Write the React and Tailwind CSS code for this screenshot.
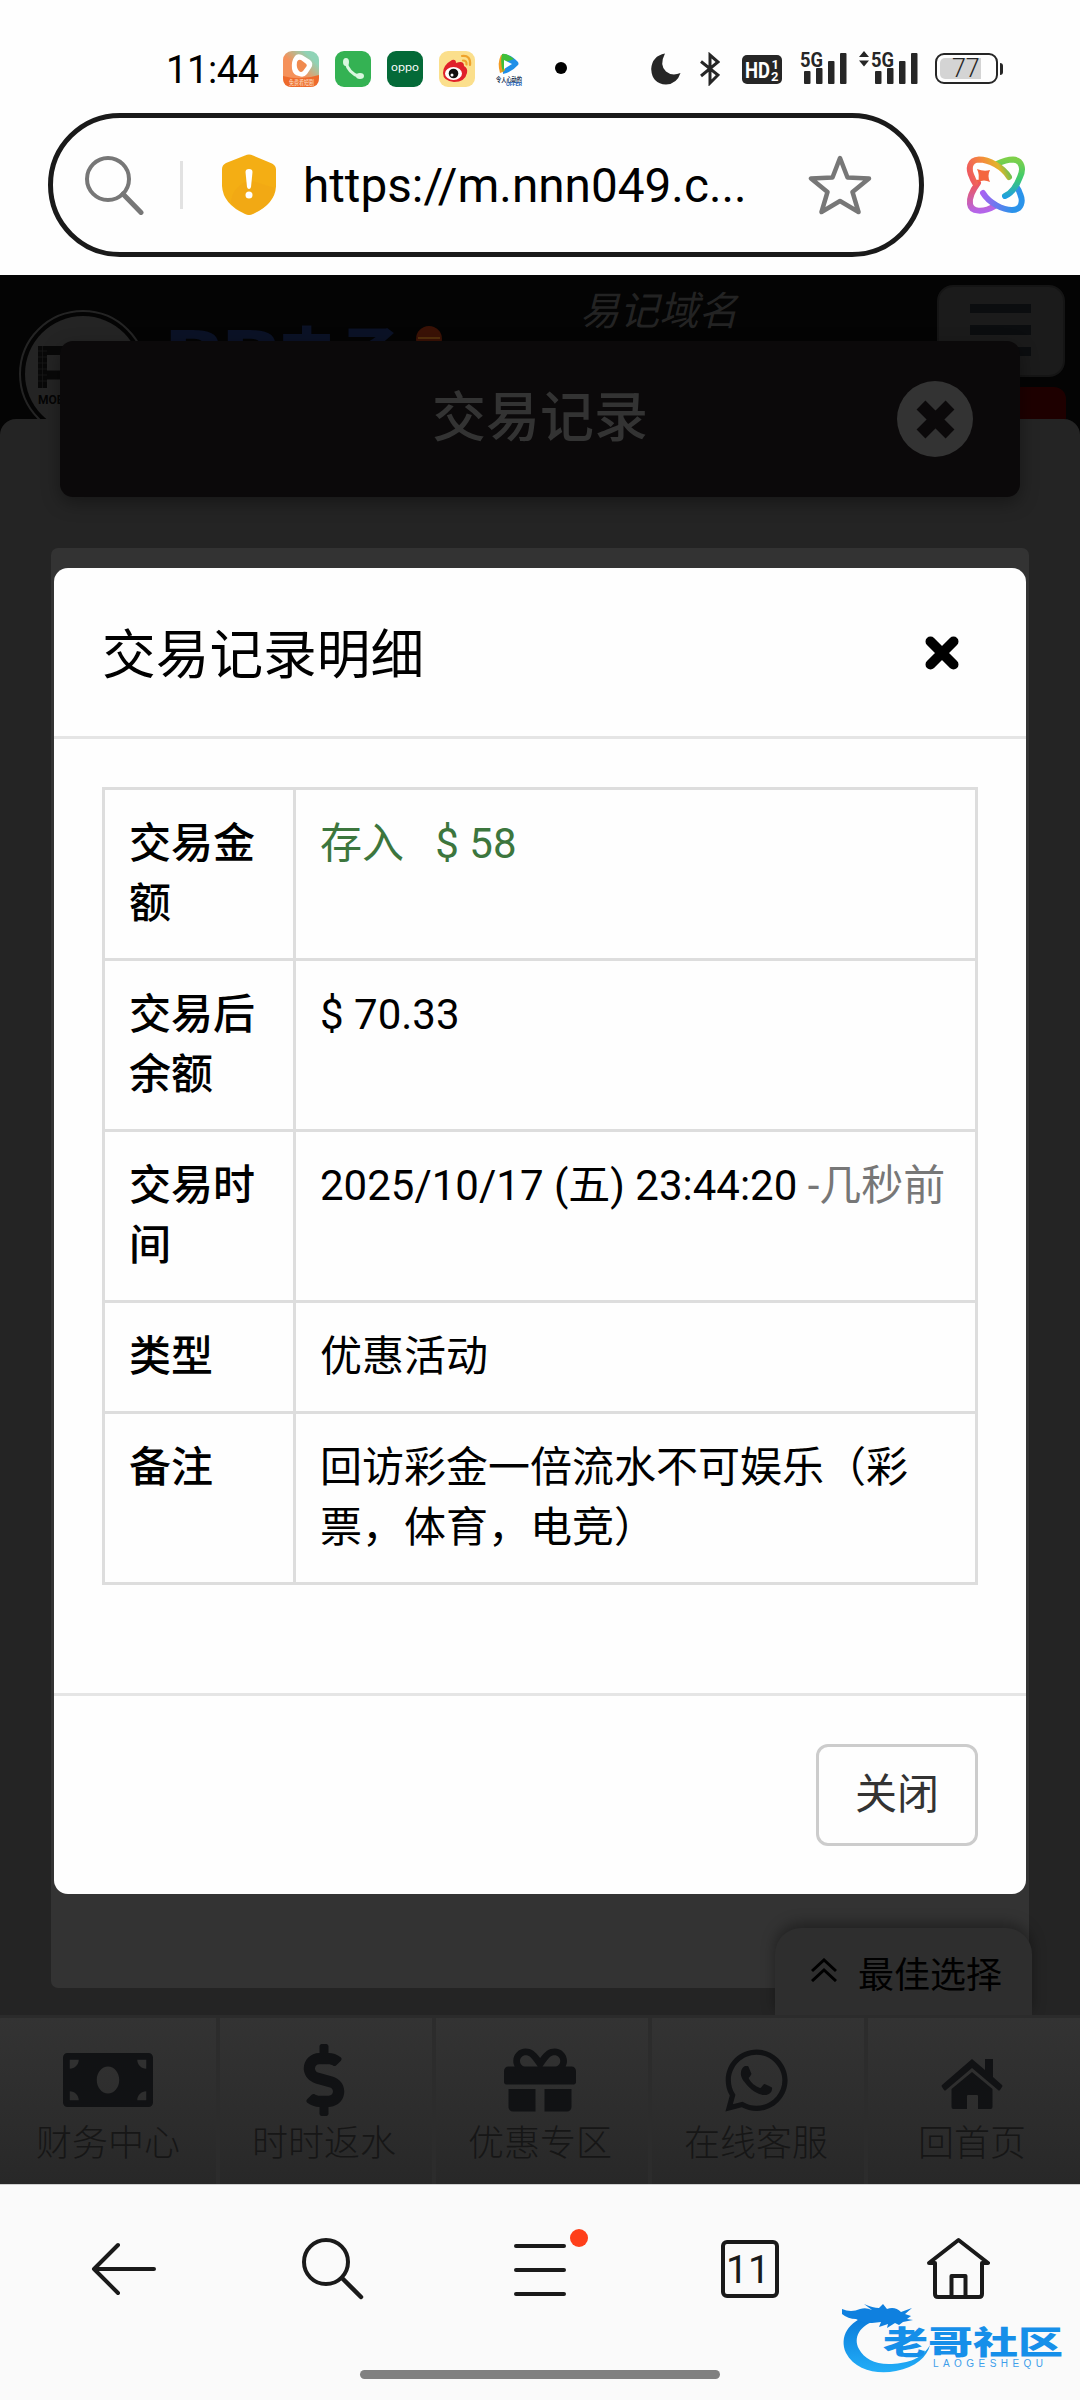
import { FaDollarSign, FaGift, FaMoneyBill, FaWhatsapp } from 'react-icons/fa';

const rows = [
  { label: '交易金额', value: <span className="text-[#3c763d]">存入{'\u00a0\u00a0\u00a0'}$ 58</span> },
  { label: '交易后余额', value: '$ 70.33' },
  {
    label: '交易时间',
    value: <>2025/10/17 (五) 23:44:20 <span className="text-[#777]">-几秒前</span></>
  },
  { label: '类型', value: '优惠活动' },
  { label: '备注', value: '回访彩金一倍流水不可娱乐（彩票，体育，电竞）' }
];

const HomeGlyph = () => (
  <svg className="w-[62px] h-[50px]" viewBox="0 0 62 50" fill="currentColor">
    <path d="M31 0L44 11V0h8v18l9 8q1 1 0 2l-2 3q-1 1-2 0L31 9 5 31q-1 1-2 0l-2-3q-1-1 0-2z" />
    <path d="M31 13L51.500 30v18q0 2-2 2H37V37q0-1-1-1H27q-1 0-1 1v13H12.500q-2 0-2-2V30z" />
  </svg>
);

const navItems = [
  { text: '财务中心', icon: <FaMoneyBill className="w-[90px] h-[72px]" /> },
  { text: '时时返水', icon: <FaDollarSign className="w-[42px] h-[72px]" /> },
  { text: '优惠专区', icon: <FaGift className="w-[72px] h-[72px]" /> },
  { text: '在线客服', icon: <FaWhatsapp className="w-[71px] h-[71px]" /> },
  { text: '回首页', icon: <div className="pt-2"><HomeGlyph /></div> }
];

function Signal({ arrows }) {
  return (
    <svg className={arrows ? 'w-[60px] h-[34px] ml-[11px] overflow-visible' : 'w-[48px] h-[34px] ml-[18px] overflow-visible'} viewBox={arrows ? '-12 0 60 34' : '0 0 48 34'} fill="#262626">
      <text x="0" y="15.500" fontSize="21" fontWeight="700" fontFamily="Roboto" textLength="23" lengthAdjust="spacingAndGlyphs">5G</text>
      <rect x="4" y="20" width="6.500" height="13" rx="1" />
      <rect x="16" y="17" width="6.500" height="16" rx="1" />
      <rect x="28" y="10" width="6.500" height="23" rx="1" />
      <rect x="40" y="2" width="6.500" height="31" rx="1" />
      {arrows && <path d="M-12 6l5-6 5 6zM-12 9.500l5 6 5-6z" />}
    </svg>
  );
}

function StatusBar() {
  return (
    <div className="h-[113px] pt-[51px] pl-[166px] flex items-start">
      <div className="w-[117px] h-9 leading-9 text-[38px] text-black tracking-[-0.4px] pt-px">11:44</div>
      <div className="flex gap-4">
        {/* video app */}
        <svg className="w-9 h-9 overflow-visible" viewBox="0 0 36 36">
          <defs>
            <linearGradient id="vid" x1="0" y1="1" x2="1" y2="0">
              <stop offset="0.450" stopColor="#f5915a" />
              <stop offset="0.800" stopColor="#8fd3b6" />
            </linearGradient>
          </defs>
          <rect width="36" height="36" rx="9" fill="url(#vid)" />
          <path d="M0 25q18 5 36-1v3q0 9-9 9H9q-9 0-9-9z" fill="#ee6a2c" />
          <path d="M12 5q2-3 7-1l8 5q4 3 1 8l-4 6q-3 4-8 2-6-1-7-7-1-8 3-13z" fill="#fff" />
          <path d="M14 11q1-3 4-2l4 3q3 2 1 4l-3 4q-2 2-4 0-3-3-2-9z" fill="#f08a4f" />
          <text x="6" y="34" fontSize="6.500" fill="#fde0c8" fontFamily="Noto Sans CJK SC" textLength="25" lengthAdjust="spacingAndGlyphs">免费看短剧</text>
        </svg>
        {/* phone */}
        <svg className="w-9 h-9" viewBox="0 0 36 36">
          <rect width="36" height="36" rx="9" fill="#34b253" />
          <path d="M11 11q2 11 14 15" fill="none" stroke="#d9f7df" strokeWidth="3" />
          <ellipse cx="11" cy="11" rx="3" ry="4" fill="#d9f7df" />
          <ellipse cx="25" cy="25" rx="4" ry="3" fill="#d9f7df" />
        </svg>
        {/* oppo */}
        <svg className="w-9 h-9" viewBox="0 0 36 36">
          <rect width="36" height="36" rx="9" fill="#046a38" />
          <text x="4" y="20" fontSize="9.500" fill="#fff" fontFamily="Inter" textLength="28" lengthAdjust="spacingAndGlyphs">oppo</text>
        </svg>
        {/* weibo */}
        <svg className="w-9 h-9" viewBox="0 0 36 36">
          <rect width="36" height="36" rx="9" fill="#fbdf8c" />
          <path d="M4 22Q4 14 13 9q4-1 4 3 8-3 8 3 4 2 3 7-2 9-13 9Q4 30 4 22z" fill="#e0202a" />
          <ellipse cx="14.500" cy="22.500" rx="8.500" ry="6.500" fill="#fff" />
          <circle cx="14.500" cy="22.500" r="4.800" fill="#111" />
          <circle cx="13" cy="24" r="1.500" fill="#fff" />
          <path d="M23 5q9-1 8 9M24 9.500q4 0 3.500 4" fill="none" stroke="#efa32c" strokeWidth="2.200" strokeLinecap="round" />
        </svg>
        {/* tencent video */}
        <svg className="w-9 h-9 overflow-visible" viewBox="0 0 36 36">
          <path d="M11 3q9 0 16 8 1 2 0 3-6 7-15 9z" fill="#1f8fe8" />
          <path d="M10 4q-4 8-1 18 4-1 5-3V5z" fill="#f39a21" />
          <path d="M11 3q5-1 12 5l-8 3-3 10q-3-9-1-18z" fill="#3fbf3a" />
          <path d="M13 9l8 4-8 5z" fill="#fff" />
          <text x="5" y="30.500" fontSize="6.500" fontWeight="700" fill="#1c3554" fontFamily="Noto Sans CJK SC" textLength="26" lengthAdjust="spacingAndGlyphs">令人心动的</text>
          <text x="15" y="35" fontSize="5.500" fontWeight="700" fill="#2a67b8" fontFamily="Roboto" textLength="16">OFFER</text>
        </svg>
      </div>
      <div className="w-3 h-3 ml-7 mt-[11px] rounded-full bg-black" />
      <svg className="w-[30px] h-8 ml-[84px] mt-0.5" viewBox="0 0 30 32" fill="#262626">
        <path d="M14 .500Q8 12 15 18.500q6 5 14.500 1.500Q26 31 15 31.500 1 31 .200 16 1 3 14 .500z" />
      </svg>
      <svg className="w-5 h-[34px] ml-[19px] mt-px" viewBox="0 0 20 34" fill="none" stroke="#262626" strokeWidth="3">
        <path d="M1 9.500L18 23 10 31V3l8 7L1 24" />
      </svg>
      <svg className="w-10 h-[29px] ml-[22px] mt-1 overflow-visible" viewBox="0 0 40 29">
        <rect width="40" height="29" rx="5" fill="#262626" />
        <text x="3" y="22.500" fontSize="22" fontWeight="700" fill="#fff" fontFamily="Roboto" textLength="25" lengthAdjust="spacingAndGlyphs">HD</text>
        <text x="29.500" y="14" fontSize="13" fontWeight="700" fill="#fff" fontFamily="Roboto">1</text>
        <text x="29" y="26" fontSize="13" fontWeight="700" fill="#fff" fontFamily="Roboto">2</text>
      </svg>
      <Signal />
      <Signal arrows />
      <div className="ml-4 mt-0.5 w-[63px] h-[31px] rounded-[9px] border-2 border-[#262626] p-[3px]">
        <div className="w-[41px] h-[21px] rounded-l-[5px] bg-[#d4d4d4] pl-3 text-[25px] leading-[22px] font-light text-[#262626]">77</div>
      </div>
      <div className="ml-0.5 mt-3 w-[3px] h-3 rounded-r bg-[#262626]" />
    </div>
  );
}

function AddressBar() {
  return (
    <div className="h-[162px] pl-12 flex items-start">
      <div className="w-[876px] h-36 rounded-full border-[5px] border-[#1a1a1a] flex items-center">
        <svg className="w-[60px] h-[60px] ml-[31px]" viewBox="0 0 60 60" fill="none" stroke="#777" strokeWidth="4">
          <circle cx="24" cy="24" r="21" />
          <path d="M39 39L57 57.500" strokeWidth="5" strokeLinecap="round" />
        </svg>
        <div className="w-[3px] h-12 ml-9 bg-[#e2e2e2]" />
        <svg className="w-[54px] h-[62px] ml-[39px]" viewBox="0 0 54 62">
          <path d="M23 1.500q4-2 8 0l19 8q4 2 4 6v17Q53 50 31 60q-4 2-8 0Q1 50 0 32V15q0-4 4-6z" fill="#f4ae14" />
          <path d="M27 26Q9 34 9 49q8 8 18 12 24-8 26-27l-26-8z" fill="#f0a215" opacity="0.400" />
          <path d="M23.500 18q0-3 3.500-3t3.500 3l-1.500 15q-.5 2-2 2t-2-2z" fill="#fff" />
          <circle cx="27" cy="41" r="3.500" fill="#fff" />
        </svg>
        <div className="ml-[27px] w-[444px] text-[47.700px] leading-none text-black whitespace-nowrap pt-1">https://m.nnn049.c...</div>
        <svg className="w-[64px] h-[60px] ml-[61px]" viewBox="0 0 64 60" fill="none" stroke="#777" strokeWidth="4.500" strokeLinejoin="round">
          <path d="M32 3l7.500 19.500L61 23.500 44.500 37 50.500 57 32 46 13.500 57l6-20L3 23.500l21.500-1z" />
        </svg>
      </div>
      <svg className="w-20 h-20 ml-[31px] mt-8" viewBox="0 0 80 80" fill="none" strokeWidth="6" strokeLinecap="round">
        <defs>
          <linearGradient id="o1" gradientUnits="userSpaceOnUse" x1="16" y1="40" x2="56" y2="24">
            <stop offset="0" stopColor="#ee5562" />
            <stop offset="0.450" stopColor="#f58a3c" />
            <stop offset="0.750" stopColor="#e2b52a" />
            <stop offset="1" stopColor="#4cc458" />
          </linearGradient>
          <linearGradient id="o2" gradientUnits="userSpaceOnUse" x1="56" y1="14" x2="56" y2="52">
            <stop offset="0" stopColor="#7ed04a" />
            <stop offset="0.500" stopColor="#3ecb6d" />
            <stop offset="1" stopColor="#1f9fe0" />
          </linearGradient>
          <linearGradient id="o3" gradientUnits="userSpaceOnUse" x1="28" y1="48" x2="60" y2="60">
            <stop offset="0" stopColor="#a763f2" />
            <stop offset="1" stopColor="#2a93ea" />
          </linearGradient>
          <linearGradient id="o4" gradientUnits="userSpaceOnUse" x1="24" y1="36" x2="28" y2="66">
            <stop offset="0" stopColor="#f2564f" />
            <stop offset="1" stopColor="#b465ea" />
          </linearGradient>
        </defs>
        <path d="M23 38C17 46 14 52 15 59 16 67 28 68 40 61" stroke="url(#o4)" />
        <path d="M28 48C34 58 48 65 57 65 67 65 68 56 65.500 50Q64 45 61 41" stroke="url(#o3)" />
        <path d="M42 19C50 15 54 14.500 58 14.500 67 15 69 24 65 32 62 40 57 48 50 51" stroke="url(#o2)" />
        <path d="M54 32C48 22 34 14.500 24 14.500 14 15 13 24 17 32Q18 35 20 38" stroke="url(#o1)" />
        <path d="M22 24q7 3 13 1-3 6 0 12-6-3-12 0 2-7-1-13z" fill="#f4663f" />
      </svg>
    </div>
  );
}

function SiteHeader() {
  return (
    <div className="h-[144px] bg-[#040404] flex items-start overflow-hidden">
      <div className="ml-[19px] mt-[35px] w-32 h-32 shrink-0 rounded-full border-2 border-[#242424] p-1">
        <div className="w-full h-full rounded-full bg-[#242424] pl-[13px] pt-[30px]">
          <svg className="w-[60px] h-[42px]" viewBox="0 0 60 42">
            <path d="M4.500 42V4.500H56V29H4.500" fill="none" stroke="#080808" strokeWidth="9" />
            <path d="M0 5h9M0 11h9M0 17h9M0 23h9M0 29h9M0 35h9M4.500 0v42" stroke="#1a1a1a" strokeWidth="0.700" />
          </svg>
          <div className="text-[12px] font-bold leading-none pt-1.5 text-[#050505]">MOBILE</div>
        </div>
      </div>
      <svg className="w-[275px] h-[90px] ml-[22px] mt-[49px]" viewBox="0 0 275 90" fill="#0b1226" fontWeight="900">
        <text x="-3" y="54" fontSize="66" fontFamily="Roboto" textLength="114" lengthAdjust="spacingAndGlyphs">BB</text>
        <text x="108" y="53" fontSize="60" fontFamily="Noto Sans CJK SC">电</text>
        <text x="171" y="53" fontSize="60" fontFamily="Noto Sans CJK SC">子</text>
        <circle cx="260" cy="15" r="13" fill="#3a1206" />
        <path d="M249 14h22" stroke="#54300c" strokeWidth="2" />
      </svg>
      <div className="ml-[136px] mt-2 w-[357px] text-[39.500px] leading-[58px] italic text-[#232323]">易记域名</div>
      <div className="flex flex-col">
        <div className="mt-2.5 w-32 h-[92px] rounded-2xl bg-[#1b1b1b] border-2 border-[#151515] pl-[31px] pt-[17px] flex flex-col gap-3">
          <div className="w-[61px] h-[9px] bg-[#0b0d0f]" />
          <div className="w-[61px] h-[10px] bg-[#0b0d0f]" />
          <div className="w-[61px] h-[9px] bg-[#0b0d0f]" />
        </div>
        <div className="mt-[10px] w-[129px] h-[60px] rounded-t-xl bg-[#1e0000]" />
      </div>
    </div>
  );
}

function RecordHeader() {
  return (
    <div className="absolute left-[60px] top-[66px] w-[960px] h-[156px] rounded-[13px] bg-[#0b090a] shadow-[0_6px_18px_rgba(0,0,0,0.35)] flex items-center">
      <div className="w-[837px] pl-[123px] text-center text-[54px] leading-none font-medium text-[#333]">交易记录</div>
      <div className="w-[76px] h-[76px] rounded-full bg-[#333] flex items-center justify-center">
        <svg className="w-[39px] h-[39px]" viewBox="0 0 39 39" fill="none" stroke="#0b090a" strokeWidth="12.500">
          <path d="M5 5l29 29M34 5l-29 29" />
        </svg>
      </div>
    </div>
  );
}

function DetailModal() {
  return (
    <div className="absolute left-[54px] top-[293px] w-[972px] rounded-[14px] bg-[#fefefe] text-black">
      <div className="h-[171px] border-b-[3px] border-[#e5e5e5] pl-12 pr-[67px] flex items-center justify-between">
        <div className="text-[53.700px] leading-none pt-2">交易记录明细</div>
        <svg className="w-[34px] h-[34px] mt-0.5" viewBox="0 0 34 34" fill="none" stroke="#000" strokeWidth="10" strokeLinecap="round">
          <path d="M5.500 5.500l23 23M28.500 5.500l-23 23" />
        </svg>
      </div>
      <div className="p-12">
        <div className="w-[876px] mb-[60px] border-[3px] border-b-0 border-[#ddd] text-[42px] leading-[60px]">
          {rows.map((row) => (
            <div key={row.label} className="flex border-b-[3px] border-[#ddd]">
              <div className="w-[191px] shrink-0 border-r-[3px] border-[#ddd] py-6 pl-6 pr-5 font-medium">{row.label}</div>
              <div className="flex-1 py-6 pl-6 pr-5">{row.value}</div>
            </div>
          ))}
        </div>
      </div>
      <div className="border-t-[3px] border-[#e5e5e5] p-12 flex justify-end">
        <button className="w-[162px] h-[102px] rounded-[12px] border-[3px] border-[#ccc] text-[42px] leading-none text-[#333]">关闭</button>
      </div>
    </div>
  );
}

function SitePage() {
  return (
    <div className="relative h-[1909px] bg-[#040404]">
      <SiteHeader />
      <div className="h-[1596px] rounded-t-[16px] bg-[#242424] px-[51px] pt-[129px]">
        <div className="h-[1440px] rounded-[7px] bg-[#333]" />
      </div>
      <RecordHeader />
      {/* best choice tab */}
      <div className="absolute left-[775px] top-[1653px] w-[257px] h-[87px] rounded-t-[26px] bg-[#2e2e2e] shadow-[0_-5px_14px_rgba(0,0,0,0.35)] flex items-center text-black">
        <svg className="w-[26px] h-[24px] ml-9 mb-1" viewBox="0 0 26 24" fill="none" stroke="currentColor" strokeWidth="3">
          <path d="M1 13L13 2l12 11M1 23l12-11 12 11" />
        </svg>
        <div className="ml-[21px] text-[36px] leading-none pt-2">最佳选择</div>
      </div>
      <div className="relative h-[169px] border-t-[3px] border-[#2b2b2b] bg-linear-to-b from-[#333] to-[#282828] grid grid-cols-5 text-[#111214]">
        {navItems.map((item) => (
          <div key={item.text} className="h-full flex flex-col items-center pt-[26px] not-first:shadow-[inset_4px_0_0_#2c2c2c]">
            <div className="h-[72px] flex items-center">{item.icon}</div>
            <div className="mt-2 text-[36px] leading-[40px] font-light text-[#161616]">{item.text}</div>
          </div>
        ))}
      </div>
      <DetailModal />
    </div>
  );
}

function BrowserBar() {
  return (
    <div className="relative h-[216px] bg-[#fafafa] border-t border-[#d0d0d0] text-[#1a1a1a]">
      <div className="pl-[91px] pt-[52px] flex">
        <svg className="w-[65px] h-[64px]" viewBox="0 0 65 64" fill="none" stroke="currentColor" strokeWidth="4" strokeLinecap="round" strokeLinejoin="round">
          <path d="M27 8L3 32l24 24M3 32h60" />
        </svg>
        <svg className="w-[64px] h-[64px] ml-[145px]" viewBox="0 0 64 64" fill="none" stroke="currentColor" strokeWidth="4" strokeLinecap="round">
          <circle cx="25" cy="25" r="22" />
          <path d="M41 41l19 19" strokeWidth="4.500" />
        </svg>
        <svg className="w-[76px] h-[72px] ml-[149px] -mt-2" viewBox="0 0 76 72" fill="none" stroke="currentColor" strokeWidth="4" strokeLinecap="round">
          <path d="M2 17h48M2 41h48M2 65h48" />
          <circle cx="65" cy="9" r="9" fill="#ff3f1a" stroke="none" />
        </svg>
        <div className="w-[58px] h-[58px] mt-[3px] ml-[131px] rounded-[6px] border-4 border-[#1a1a1a] flex items-center justify-center text-[39px] leading-none pt-0.5 pr-1">11</div>
        <svg className="w-16 h-16 ml-[147px]" viewBox="0 0 64 64" fill="none" stroke="currentColor" strokeWidth="4" strokeLinejoin="round">
          <path d="M9 26H3L32.500 3 62 26h-6v31q0 3-3 3H12q-3 0-3-3z" />
          <path d="M25.500 60V39h14v21" />
        </svg>
      </div>
      <div className="absolute left-[360px] top-[185px] w-[360px] h-[9px] rounded-full bg-[#808080]" />
      <svg className="absolute left-[840px] top-[118px] w-[228px] h-[78px] overflow-visible" viewBox="0 0 228 78">
        <defs>
          <linearGradient id="wm" x1="0" y1="0" x2="0" y2="1">
            <stop offset="0" stopColor="#0a78d8" />
            <stop offset="1" stopColor="#22aef8" />
          </linearGradient>
        </defs>
        <path d="M30 12C8 18-1 34 6 50c9 17 31 22 50 18 20-4 31-14 34-26-8 14-22 18-38 19-16 1-28-5-33-15C13 35 19 22 38 17z" fill="url(#wm)" />
        <path d="M2 6q9 4 18 0 6-2 12 1l-8-6q9 4 15 4l4-4 4 5q8-3 14 3l11-4-7 6 6 2-4 3 6 1-10 2-4 3-4-2-8 5 1-4-9 3 2-5-9 1q-10 0-16-4-8 0-14-5z" fill="#0f80df" />
        <text x="43" y="51" fontSize="32" fontWeight="900" fontFamily="Noto Sans CJK SC" fill="#168fe9" textLength="180" lengthAdjust="spacingAndGlyphs">老哥社区</text>
        <text x="93" y="64" fontSize="10" fontFamily="Liberation Sans" fill="#3d9eea" textLength="110">LAOGESHEQU</text>
      </svg>
    </div>
  );
}

export default function App() {
  return (
    <div className="w-[1080px] h-[2400px] overflow-hidden bg-[#fefefe] font-[Roboto,'Noto_Sans_CJK_SC',sans-serif]">
      <StatusBar />
      <AddressBar />
      <SitePage />
      <BrowserBar />
    </div>
  );
}
